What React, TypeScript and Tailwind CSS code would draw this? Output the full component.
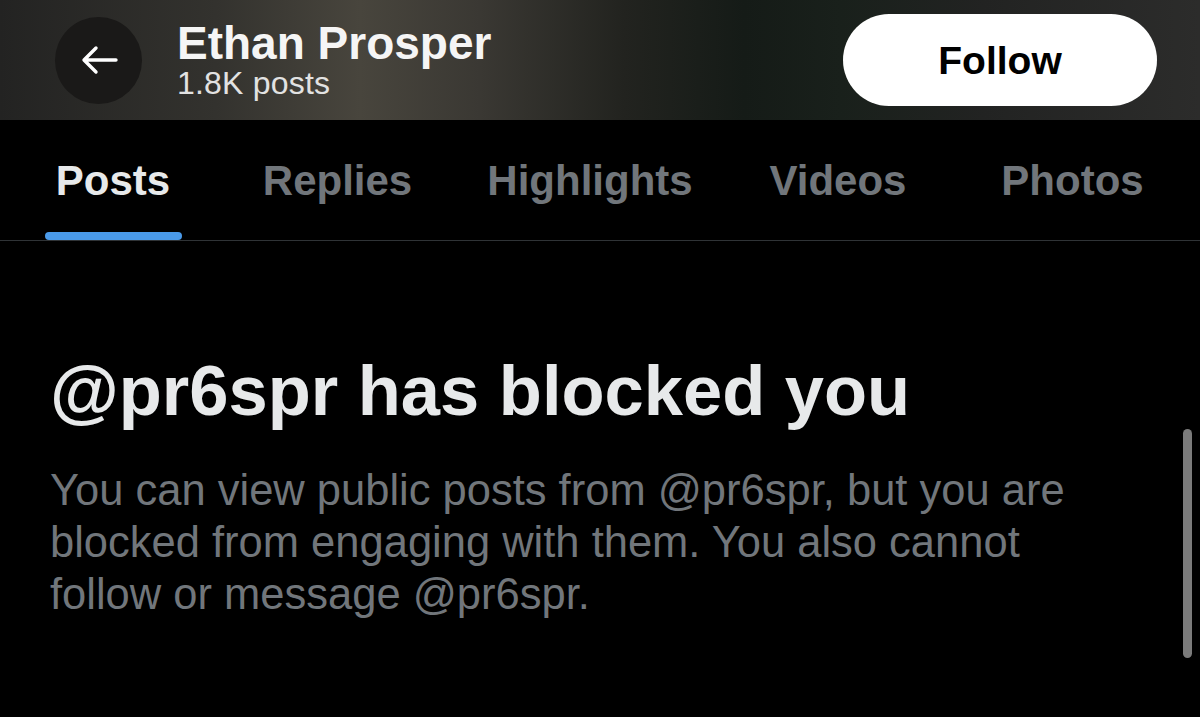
import React from 'react';

const tabs = [
  { label: 'Posts', active: true },
  { label: 'Replies', active: false },
  { label: 'Highlights', active: false },
  { label: 'Videos', active: false },
  { label: 'Photos', active: false },
];

const BackArrow = () => (
  <svg width="40" height="30" viewBox="0 0 40 30" fill="none">
    <path
      d="M37 15H6M17 3L5 15l12 12"
      stroke="#ffffff"
      strokeWidth="3.4"
      strokeLinecap="round"
      strokeLinejoin="round"
    />
  </svg>
);

const App: React.FC = () => {
  return (
    <div className="w-[1200px] h-[717px] bg-black overflow-hidden relative font-['Liberation_Sans',Arial,sans-serif]">
      {/* header over blurred banner */}
      <div className="h-[120px] flex items-center pl-[55px] pr-[43px] bg-[linear-gradient(90deg,#232322_0%,#33322e_18%,#48453d_30%,#3a3833_40%,#22231f_52%,#151b17_62%,#19201b_70%,#222322_82%,#2c2c2b_100%)]">
        <button className="w-[87px] h-[87px] rounded-full bg-[#1a1918] flex items-center justify-center">
          <BackArrow />
        </button>
        <div className="ml-[35px] flex flex-col">
          <span className="text-[46px] leading-[46px] font-bold text-[#f5f5f5]">Ethan Prosper</span>
          <span className="text-[32px] leading-[34px] text-[#e2e2e2] tracking-[0.2px]">1.8K posts</span>
        </div>
        <button className="ml-auto w-[314px] h-[92px] rounded-full bg-white flex items-center justify-center">
          <span className="text-[39px] leading-[39px] font-bold text-black">Follow</span>
        </button>
      </div>

      {/* tabs */}
      <div className="grid grid-cols-[226px_223px_282px_214px_255px] border-b border-[#2f3336]">
        {tabs.map((t) => (
          <div key={t.label} className="flex flex-col items-center pt-[40px]">
            <span
              className={`text-[42px] leading-[42px] font-bold ${
                t.active ? 'text-[#e7e9ea]' : 'text-[#71767b]'
              }`}
            >
              {t.label}
            </span>
            <div
              className={`mt-[30px] h-[8px] w-[137px] rounded-full ${
                t.active ? 'bg-[#4a9ae9]' : 'bg-transparent'
              }`}
            />
          </div>
        ))}
      </div>

      {/* blocked notice */}
      <div className="pl-[50px] pt-[114px]">
        <h1 className="text-[70.5px] leading-[71px] font-bold text-[#e7e9ea]">
          @pr6spr has blocked you
        </h1>
        <p className="mt-[38px] w-[1060px] text-[43.5px] leading-[52px] text-[#71767b]">
          You can view public posts from @pr6spr, but you are blocked from engaging with them. You also cannot
          follow or message @pr6spr.
        </p>
      </div>

      {/* scrollbar */}
      <div className="absolute left-[1183px] top-[429px] w-[9px] h-[229px] rounded-full bg-[#7b7b7b]" />
    </div>
  );
};

export default App;
